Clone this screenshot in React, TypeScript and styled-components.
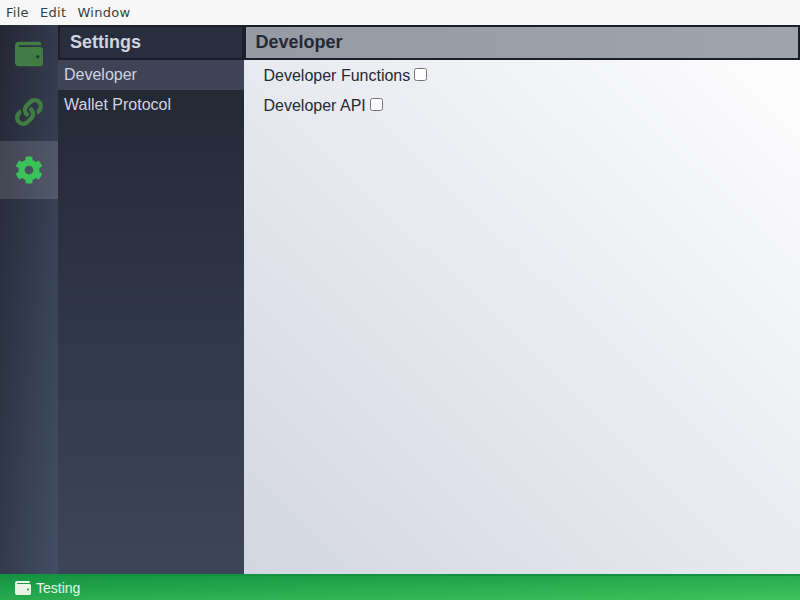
import React from "react";
import styled, { createGlobalStyle } from "styled-components";
import { FaWallet, FaLink, FaCog } from "react-icons/fa";

const GlobalStyle = createGlobalStyle`
  * { box-sizing: border-box; }
  body {
    margin: 0;
    overflow: hidden;
    font-family: "Liberation Sans", Arial, sans-serif;
  }
`;

const Window = styled.div`
  display: flex;
  flex-direction: column;
  width: 100vw;
  height: 100vh;
`;

const MenuBar = styled.nav`
  display: flex;
  gap: 11.3px;
  flex: 0 0 25px;
  padding: 0 6px;
  background: #f7f7f7;
  color: #3d3d3d;
  font: 13px/25px "DejaVu Sans", sans-serif;
  letter-spacing: 0.25px;
`;

const Body = styled.div`
  display: flex;
  flex: 1;
  min-height: 0;
`;

const Rail = styled.aside`
  flex: 0 0 58px;
  background: linear-gradient(to bottom right, #222733, #434e66);
`;

const RailItem = styled.div<{ $active?: boolean }>`
  display: flex;
  align-items: center;
  justify-content: center;
  height: 58px;
  font-size: 28px;
  color: ${(p) => (p.$active ? "#3bc15a" : "#407c43")};
  background: ${(p) => (p.$active ? "rgba(255, 255, 255, 0.13)" : "transparent")};
`;

const SettingsPanel = styled.section`
  display: flex;
  flex-direction: column;
  flex: 0 0 186px;
  color: #d0d4e0;
`;

const SettingsList = styled.div`
  flex: 1;
  background: linear-gradient(to bottom, #222733, #3d455b);
`;

const Header = styled.h1<{ $light?: boolean }>`
  height: 35px;
  margin: 0;
  padding: 0 ${(p) => (p.$light ? "9.5px" : "10px")};
  border: 2px solid #1b1f29;
  font-size: 18px;
  line-height: 31px;
  color: ${(p) => (p.$light ? "#242936" : "#d0d4e0")};
  background: ${(p) => (p.$light ? "linear-gradient(to right, #959aa4, #9fa3ab)" : "#282e3d")};
`;

const SettingsItem = styled.div<{ $active?: boolean }>`
  height: 30px;
  padding: 0 6px;
  font-size: 16px;
  line-height: 29px;
  background: ${(p) => (p.$active ? "#3e4355" : "transparent")};
`;

const Content = styled.main`
  flex: 1;
  background: linear-gradient(to top right, #d2d6e1, #ffffff);
  color: #242936;
`;

const Option = styled.label`
  display: flex;
  align-items: center;
  height: 30px;
  padding: 2px 0 0 19.5px;
  font-size: 16px;
  line-height: 28px;
`;

const Checkbox = styled.input`
  width: 13px;
  height: 13px;
  margin: 0 0 3px 4px;
`;

const StatusBar = styled.footer`
  display: flex;
  align-items: center;
  gap: 5px;
  flex: 0 0 26px;
  padding-left: 15px;
  border-top: 2px solid #15923e;
  background: linear-gradient(to bottom right, #159342, #3fc35c);
  color: #e8f5e6;
  font-size: 14px;
`;

export default function App() {
  return (
    <Window>
      <GlobalStyle />
      <MenuBar>
        <span>File</span>
        <span>Edit</span>
        <span>Window</span>
      </MenuBar>
      <Body>
        <Rail>
          <RailItem><FaWallet /></RailItem>
          <RailItem><FaLink /></RailItem>
          <RailItem $active><FaCog /></RailItem>
        </Rail>
        <SettingsPanel>
          <Header>Settings</Header>
          <SettingsList>
            <SettingsItem $active>Developer</SettingsItem>
            <SettingsItem>Wallet Protocol</SettingsItem>
          </SettingsList>
        </SettingsPanel>
        <Content>
          <Header $light>Developer</Header>
          <Option>Developer Functions<Checkbox type="checkbox" /></Option>
          <Option>Developer API<Checkbox type="checkbox" /></Option>
        </Content>
      </Body>
      <StatusBar>
        <FaWallet size={16} />
        <span>Testing</span>
      </StatusBar>
    </Window>
  );
}
